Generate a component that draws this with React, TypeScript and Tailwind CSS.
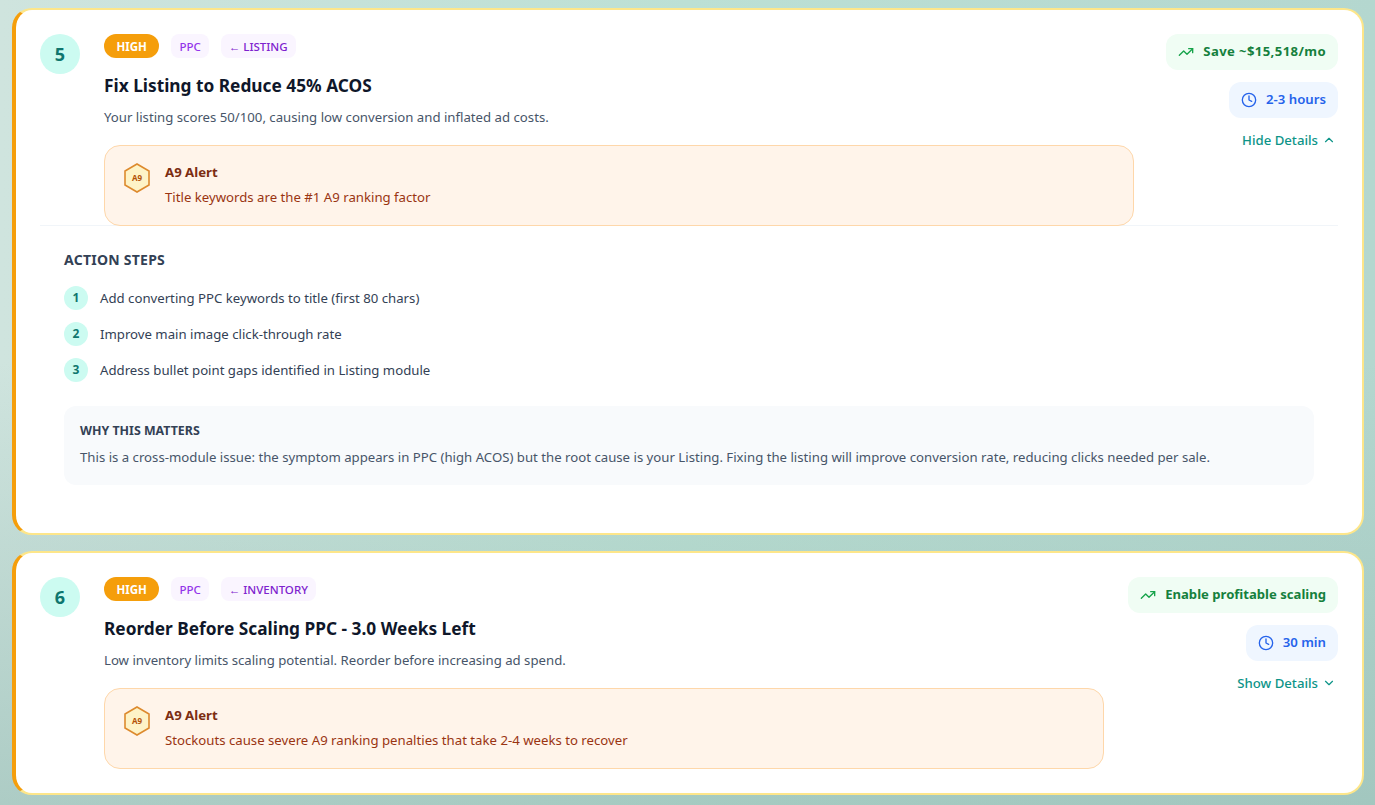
import { ChevronDown, ChevronUp, Clock, TrendingUp } from 'lucide-react';

type Task = {
  rank: number;
  module: string;
  title: string;
  description: string;
  alert: string;
  impact: string;
  effort: string;
  expanded?: boolean;
  steps?: string[];
  why?: string;
};

const tasks: Task[] = [
  {
    rank: 5,
    module: '← LISTING',
    title: 'Fix Listing to Reduce 45% ACOS',
    description: 'Your listing scores 50/100, causing low conversion and inflated ad costs.',
    alert: 'Title keywords are the #1 A9 ranking factor',
    impact: 'Save ~$15,518/mo',
    effort: '2-3 hours',
    expanded: true,
    steps: [
      'Add converting PPC keywords to title (first 80 chars)',
      'Improve main image click-through rate',
      'Address bullet point gaps identified in Listing module',
    ],
    why: 'This is a cross-module issue: the symptom appears in PPC (high ACOS) but the root cause is your Listing. Fixing the listing will improve conversion rate, reducing clicks needed per sale.',
  },
  {
    rank: 6,
    module: '← INVENTORY',
    title: 'Reorder Before Scaling PPC - 3.0 Weeks Left',
    description: 'Low inventory limits scaling potential. Reorder before increasing ad spend.',
    alert: 'Stockouts cause severe A9 ranking penalties that take 2-4 weeks to recover',
    impact: 'Enable profitable scaling',
    effort: '30 min',
  },
];

function A9Badge() {
  return (
    <svg width="28" height="32" viewBox="0 0 28 32" className="shrink-0">
      <polygon points="14,2 26,9 26,23 14,30 2,23 2,9" fill="#fef3c7" stroke="#dd8a2e" strokeWidth="1.6" />
      <text x="14" y="19" textAnchor="middle" fontSize="8" fontWeight="700" fill="#b45309">
        A9
      </text>
    </svg>
  );
}

function TaskCard({ task }: { task: Task }) {
  return (
    <div className="bg-white rounded-[20px] border-2 border-[#fde68a] border-l-4 border-l-[#f59e0b]">
      <div className="flex gap-6 p-6">
        <div className="w-10 h-10 shrink-0 rounded-full bg-[#ccfbf1] text-[#0f766e] flex items-center justify-center text-lg font-bold">
          {task.rank}
        </div>

        <div className="flex-1 min-w-0">
          <div className="flex items-center gap-3 h-6">
            <span className="h-6 px-[12.5px] pt-px rounded-full bg-[#f59e0b] text-white text-[11.5px] font-bold flex items-center">HIGH</span>
            <span className="h-6 px-2 pt-px rounded-lg bg-[#faf5ff] text-[#9333ea] text-[11.5px] font-medium flex items-center">PPC</span>
            <span className="h-6 px-2 pt-px rounded-lg bg-[#faf5ff] text-[#7e22ce] text-[11.5px] font-medium flex items-center">{task.module}</span>
          </div>
          <h3 className="mt-4 text-[17.3px] leading-6 font-bold text-[#0f172a]">{task.title}</h3>
          <p className="mt-[9px] text-[13.2px] leading-5 text-[#475569]">{task.description}</p>

          {/* A9 alert */}
          <div className="mt-[18px] h-[81px] flex items-start gap-[14px] px-[18px] pt-[16px] rounded-2xl bg-[#fff4ea] border border-[#fed7aa]">
            <A9Badge />
            <div>
              <p className="text-[13.2px] leading-5 font-bold text-[#7c2d12]">A9 Alert</p>
              <p className="mt-[5px] text-[13.2px] leading-5 text-[#9a3412]">{task.alert}</p>
            </div>
          </div>
        </div>

        <div className="min-w-[180px] shrink-0 flex flex-col items-end gap-3">
          <div className={task.expanded ? 'h-9 px-3 rounded-xl bg-[#f0fdf4] text-[#15803d] flex items-center gap-[9px] text-[13.1px] font-bold whitespace-nowrap tracking-[0.4px]' : 'h-9 px-3 rounded-xl bg-[#f0fdf4] text-[#15803d] flex items-center gap-[9px] text-[13.1px] font-bold whitespace-nowrap'}>
            <TrendingUp className="w-4 h-4 text-[#16a34a]" />
            {task.impact}
          </div>
          <div className="h-9 px-3 rounded-xl bg-[#eff6ff] text-[#2563eb] flex items-center gap-[9px] text-[13.2px] font-semibold whitespace-nowrap">
            <Clock className="w-4 h-4" />
            {task.effort}
          </div>
          <button className="flex items-center gap-1 pr-[2px] text-[13.2px] leading-5 font-medium text-[#0d9488]">
            {task.expanded ? 'Hide Details' : 'Show Details'}
            {task.expanded ? <ChevronUp className="w-[14px] h-[14px]" /> : <ChevronDown className="w-[14px] h-[14px]" />}
          </button>
        </div>
      </div>

      {task.expanded && (
        <div className="mx-6 -mt-[25px] border-t border-[#f1f5f9] px-6 pt-6 pb-12">
          <h4 className="text-[14px] leading-5 tracking-[0.25px] font-bold text-[#334155]">ACTION STEPS</h4>
          <ol className="mt-4 flex flex-col gap-3">
            {task.steps?.map((step, i) => (
              <li key={step} className="flex items-center gap-3">
                <span className="w-6 h-6 rounded-full bg-[#ccfbf1] text-[#0f766e] flex items-center justify-center text-xs font-bold">
                  {i + 1}
                </span>
                <span className="text-[13.2px] leading-5 pb-px text-[#334155]">{step}</span>
              </li>
            ))}
          </ol>
          <div className="mt-6 h-[79px] rounded-xl bg-[#f8fafc] px-4 pt-[17px]">
            <h5 className="text-[12.4px] leading-4 font-bold text-[#334155]">WHY THIS MATTERS</h5>
            <p className="mt-2 text-[13.2px] leading-5 text-[#475569]">{task.why}</p>
          </div>
        </div>
      )}
    </div>
  );
}

export default function App() {
  return (
    <div className="h-[805px] overflow-hidden bg-[linear-gradient(180deg,transparent_45%,rgba(150,188,180,0.6)_100%),linear-gradient(90deg,#cfe4de_0%,#bce0d4_50%,#b4d7cf_100%)] pl-3 pr-[11px] pt-2 font-['Noto_Sans','Open_Sans',sans-serif]">
      <div className="flex flex-col gap-4">
        {tasks.map((task) => (
          <TaskCard key={task.rank} task={task} />
        ))}
      </div>
    </div>
  );
}
